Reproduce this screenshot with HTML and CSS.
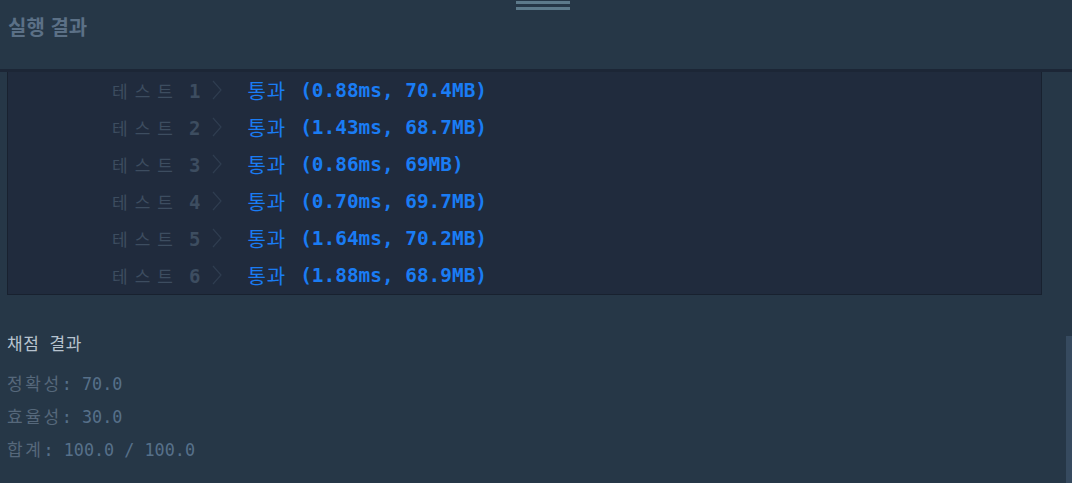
FILE: index.html
```html
<!DOCTYPE html>
<html lang="ko">
<head>
<meta charset="utf-8">
<title>실행 결과</title>
<link rel="stylesheet" href="styles.css">
</head>
<body>
<div class="header">
  <div class="handle"></div>
  <div class="title">실행 결과</div>
</div>
<div class="panel">
  <div class="row"><span class="lbl">테스트</span><span class="num">1</span><svg class="chev" viewBox="0 0 10 20"><polyline points="1,1 9,10 1,19"/></svg><span class="pass">통과</span><span class="res">(0.88ms, 70.4MB)</span></div>
  <div class="row"><span class="lbl">테스트</span><span class="num">2</span><svg class="chev" viewBox="0 0 10 20"><polyline points="1,1 9,10 1,19"/></svg><span class="pass">통과</span><span class="res">(1.43ms, 68.7MB)</span></div>
  <div class="row"><span class="lbl">테스트</span><span class="num">3</span><svg class="chev" viewBox="0 0 10 20"><polyline points="1,1 9,10 1,19"/></svg><span class="pass">통과</span><span class="res">(0.86ms, 69MB)</span></div>
  <div class="row"><span class="lbl">테스트</span><span class="num">4</span><svg class="chev" viewBox="0 0 10 20"><polyline points="1,1 9,10 1,19"/></svg><span class="pass">통과</span><span class="res">(0.70ms, 69.7MB)</span></div>
  <div class="row"><span class="lbl">테스트</span><span class="num">5</span><svg class="chev" viewBox="0 0 10 20"><polyline points="1,1 9,10 1,19"/></svg><span class="pass">통과</span><span class="res">(1.64ms, 70.2MB)</span></div>
  <div class="row"><span class="lbl">테스트</span><span class="num">6</span><svg class="chev" viewBox="0 0 10 20"><polyline points="1,1 9,10 1,19"/></svg><span class="pass">통과</span><span class="res">(1.88ms, 68.9MB)</span></div>
</div>
<div class="summary">
  <div class="sum-title"><span class="ko-t">채점</span> <span class="ko-t">결과</span></div>
  <div class="score"><span class="ko">정확성</span>: 70.0</div>
  <div class="score"><span class="ko">효율성</span>: 30.0</div>
  <div class="score"><span class="ko">합계</span>: 100.0 / 100.0</div>
</div>
<div class="scrollbar"></div>
</body>
</html>
```

FILE: styles.css
```css
html, body {
  margin: 0;
  padding: 0;
}
body {
  background: #263747;
  width: 1072px;
  height: 483px;
  overflow: hidden;
  font-family: "DejaVu Sans Mono", "Noto Sans CJK KR", monospace;
}
.header {
  box-sizing: border-box;
  padding-top: 1px;
  border-bottom: 3px solid #1c2636;
  height: 72px;
}
.handle {
  width: 54px;
  height: 3px;
  margin-left: 516px;
  border-top: 3px solid #5d7a8b;
  border-bottom: 3px solid #5d7a8b;
}
.title {
  margin-top: 5px;
  padding-left: 8px;
  font: bold 20px/24px "Noto Sans CJK KR", sans-serif;
  color: #5b7086;
}
.panel {
  margin-left: 7px;
  width: 1035px;
  box-sizing: border-box;
  background: #202b3d;
  border: 1px solid #18212f;
  border-top: none;
  height: 223px;
}
.row {
  height: 37px;
  display: flex;
  align-items: center;
  padding-left: 104px;
  white-space: pre;
}
.lbl {
  font: 17px "Noto Sans CJK KR", sans-serif;
  letter-spacing: 7px;
  color: #3d4d60;
}
.num {
  font: bold 19px "DejaVu Sans Mono", monospace;
  color: #3d4d60;
  margin-left: 9px;
}
.chev {
  width: 10px;
  height: 20px;
  margin-left: 12px;
  margin-top: -2px;
  fill: none;
  stroke: #2f3d50;
  stroke-width: 1.2;
}
.pass {
  margin-left: 25px;
  font: 20px "Noto Sans CJK KR", sans-serif;
  letter-spacing: 1px;
  color: #1a7cf4;
}
.res {
  margin-left: 14px;
  font: bold 19.4px "DejaVu Sans Mono", monospace;
  color: #1a7cf4;
}
.summary {
  margin-top: 31px;
  padding-left: 7px;
}
.sum-title {
  height: 33px;
  line-height: 33px;
  margin-bottom: 7px;
  font-size: 17px;
  color: #b7c3cf;
}
.ko-t {
  font-family: "Noto Sans CJK KR", sans-serif;
  font-size: 17px;
  letter-spacing: 0.5px;
}
.score {
  height: 33px;
  line-height: 33px;
  font-size: 16.8px;
  color: #56708a;
}
.ko {
  font-family: "Noto Sans CJK KR", sans-serif;
  font-size: 17px;
  letter-spacing: 2.6px;
  color: #56687b;
}
.scrollbar {
  position: absolute;
  left: 1066px;
  top: 336px;
  width: 6px;
  height: 147px;
  background: #364a5f;
}
```
